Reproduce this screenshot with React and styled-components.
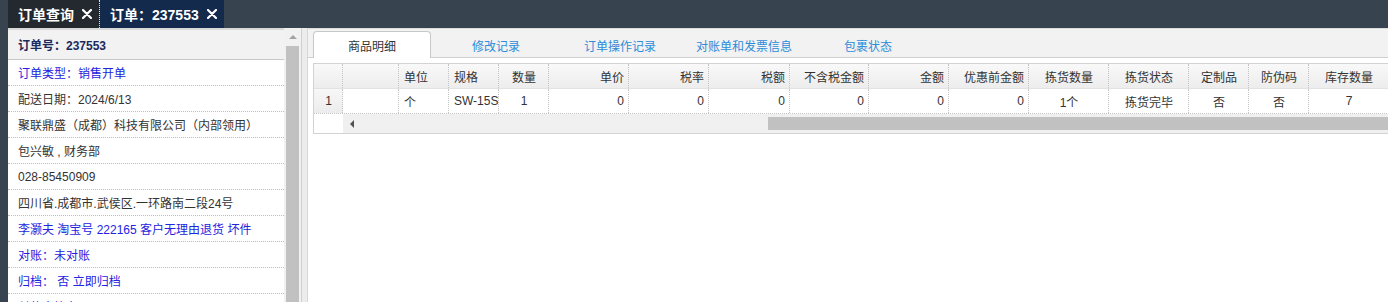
import React from 'react'
import styled, { createGlobalStyle } from 'styled-components'

const GlobalStyle = createGlobalStyle`
	html, body {
		margin: 0;
		padding: 0;
		overflow: hidden;
	}
	body {
		font-family: "Liberation Sans", "Noto Sans CJK SC", sans-serif;
		font-size: 12px;
		color: #333;
	}
	* { box-sizing: border-box; }
`

const Page = styled.div`
	width: 1388px;
	height: 302px;
	display: flex;
	flex-direction: column;
	background: #fff;
	overflow: hidden;
`

const TopBar = styled.div`
	height: 28px;
	flex: none;
	display: flex;
	align-items: stretch;
	background: #37434f;
	padding-left: 8px;
`

const PageTab = styled.div`
	display: flex;
	align-items: center;
	gap: 8px;
	padding: 0 7px 0 10px;
	color: #fff;
	font-size: 14px;
	font-weight: bold;
	background: ${props => props.active ? '#132a4c' : '#23292f'};
	border-right: ${props => props.active ? 'none' : '1px dotted #e8e8e8'};
	white-space: nowrap;
`

const CloseIcon = () => (
	<svg width="10" height="10" viewBox="0 0 10 10">
		<path d="M1 1L9 9M9 1L1 9" stroke="#fff" strokeWidth="2.2" strokeLinecap="round" />
	</svg>
)

const Body = styled.div`
	flex: 1;
	display: flex;
	min-height: 0;
`

const Rail = styled.div`
	width: 8px;
	flex: none;
	background: #37434f;
`

const InfoPanel = styled.div`
	width: 293px;
	flex: none;
	display: flex;
	overflow: hidden;
`

const InfoList = styled.div`
	width: 276px;
	flex: none;
	border-top: 2px solid #d9d9d9;
`

const InfoHeader = styled.div`
	height: 30px;
	display: flex;
	align-items: center;
	padding-left: 10px;
	background: #f2f2f2;
	border-bottom: 1px solid #c8c8c8;
	color: #1c2a5b;
	font-weight: bold;
	white-space: nowrap;
`

const InfoRow = styled.div`
	height: 26px;
	display: flex;
	align-items: center;
	padding-left: 10px;
	border-bottom: 1px dotted #bdbdbd;
	color: ${props => props.tone === 'blue' ? '#2323dd' : '#333'};
	white-space: nowrap;
	overflow: hidden;
`

const VScroll = styled.div`
	width: 17px;
	flex: none;
	background: #f1f1f1;
	display: flex;
	flex-direction: column;
	align-items: center;
	padding-top: 7px;
	gap: 7px;
`

const UpArrow = styled.div`
	width: 0;
	height: 0;
	border-left: 4px solid transparent;
	border-right: 4px solid transparent;
	border-bottom: 4px solid #a3a3a3;
`

const VThumb = styled.div`
	width: 13px;
	flex: 1;
	background: #c1c1c1;
`

const Splitter = styled.div`
	width: 6px;
	flex: none;
	background: #ececec;
	border-left: 1px solid #d0d0d0;
`

const Main = styled.div`
	flex: 1;
	min-width: 0;
	border-left: 1px solid #d8d8d8;
	overflow: hidden;
`

const TabStrip = styled.div`
	height: 30px;
	display: flex;
	align-items: flex-end;
	gap: 6px;
	padding-left: 5px;
	background: #f2f2f2;
	border-top: 1px solid #dcdcdc;
	border-bottom: 1px solid #cfcfcf;
`

const Tab = styled.div`
	width: 118px;
	height: 27px;
	flex: none;
	display: flex;
	align-items: center;
	justify-content: center;
	margin-bottom: -1px;
	position: relative;
	border: 1px solid ${props => props.active ? '#c8c8c8' : 'transparent'};
	border-bottom: none;
	border-radius: 4px 4px 0 0;
	background: ${props => props.active ? '#fff' : 'transparent'};
	color: ${props => props.active ? '#333' : '#2d8cd8'};
	white-space: nowrap;
`

const GridBox = styled.div`
	margin: 5px 0 0 5px;
	width: 1076px;
	border: 1px solid #d3d3d3;
	border-right: none;
`

const columns = '29px 56px 50px 50px 50px 80px 80px 81px 79px 80px 80px 80px 80px 60px 60px 80px'

const GridRow = styled.div`
	display: grid;
	grid-template-columns: ${columns};
	height: 25px;
	border-bottom: 1px ${props => props.head ? 'solid #e2e2e2' : 'dotted #c4c4c4'};
	background: ${props => props.head ? 'linear-gradient(#f9f9f9, #ededed)' : '#fff'};
`

const Cell = styled.div`
	display: flex;
	align-items: center;
	justify-content: ${props => props.align === 'right' ? 'flex-end' : props.align === 'left' ? 'flex-start' : 'center'};
	padding: 0 4px 0 5px;
	border-right: 1px dotted #c4c4c4;
	white-space: nowrap;
	overflow: hidden;
	background: ${props => props.num ? 'linear-gradient(#f7f7f7, #ececec)' : 'transparent'};
`

const HScrollRow = styled.div`
	display: flex;
	height: 19px;
`

const Corner = styled.div`
	width: 29px;
	flex: none;
	background: #fff;
`

const HTrack = styled.div`
	flex: 1;
	display: flex;
	align-items: center;
	background: #f0f0f0;
	padding-left: 7px;
`

const LeftArrow = styled.div`
	width: 0;
	height: 0;
	border-top: 4px solid transparent;
	border-bottom: 4px solid transparent;
	border-right: 4px solid #505050;
`

const HThumb = styled.div`
	margin-left: 414px;
	flex: 1;
	height: 13px;
	background: #c1c1c1;
`

const info = [
	{ text: '订单类型：销售开单', tone: 'blue' },
	{ text: '配送日期：2024/6/13' },
	{ text: '聚联鼎盛（成都）科技有限公司（内部领用）' },
	{ text: '包兴敏 , 财务部' },
	{ text: '028-85450909' },
	{ text: '四川省.成都市.武侯区.一环路南二段24号' },
	{ text: '李灏夫 淘宝号 222165 客户无理由退货 坏件', tone: 'blue' },
	{ text: '对账：未对账', tone: 'blue' },
	{ text: '归档：  否 立即归档', tone: 'blue' },
	{ text: '付款人签名', tone: 'blue' },
]

const tabs = ['商品明细', '修改记录', '订单操作记录', '对账单和发票信息', '包裹状态']

const cols = [
	{ title: '', align: 'center', value: '1', num: true },
	{ title: '', align: 'left', value: '' },
	{ title: '单位', align: 'left', value: '个' },
	{ title: '规格', align: 'left', value: 'SW-15S' },
	{ title: '数量', align: 'center', value: '1' },
	{ title: '单价', align: 'right', value: '0' },
	{ title: '税率', align: 'right', value: '0' },
	{ title: '税额', align: 'right', value: '0' },
	{ title: '不含税金额', align: 'right', value: '0' },
	{ title: '金额', align: 'right', value: '0' },
	{ title: '优惠前金额', align: 'right', value: '0' },
	{ title: '拣货数量', align: 'center', value: '1个' },
	{ title: '拣货状态', align: 'center', value: '拣货完毕' },
	{ title: '定制品', align: 'center', value: '否' },
	{ title: '防伪码', align: 'center', value: '否' },
	{ title: '库存数量', align: 'center', value: '7' },
]

const App = () => {
	return (
		<>
			<GlobalStyle />
			<Page>
				<TopBar>
					<PageTab>订单查询 <CloseIcon /></PageTab>
					<PageTab active>订单：237553 <CloseIcon /></PageTab>
				</TopBar>
				<Body>
					<Rail />
					<InfoPanel>
						<InfoList>
							<InfoHeader>订单号：237553</InfoHeader>
							{info.map((row, i) => (
								<InfoRow key={i} tone={row.tone}>{row.text}</InfoRow>
							))}
						</InfoList>
						<VScroll>
							<UpArrow />
							<VThumb />
						</VScroll>
					</InfoPanel>
					<Splitter />
					<Main>
						<TabStrip>
							{tabs.map((t, i) => (
								<Tab key={t} active={i === 0}>{t}</Tab>
							))}
						</TabStrip>
						<GridBox>
							<GridRow head>
								{cols.map((c, i) => (
									<Cell key={i} align={c.align}>{c.title}</Cell>
								))}
							</GridRow>
							<GridRow>
								{cols.map((c, i) => (
									<Cell key={i} align={c.align} num={c.num}>{c.value}</Cell>
								))}
							</GridRow>
							<HScrollRow>
								<Corner />
								<HTrack>
									<LeftArrow />
									<HThumb />
								</HTrack>
							</HScrollRow>
						</GridBox>
					</Main>
				</Body>
			</Page>
		</>
	)
}

export default App
